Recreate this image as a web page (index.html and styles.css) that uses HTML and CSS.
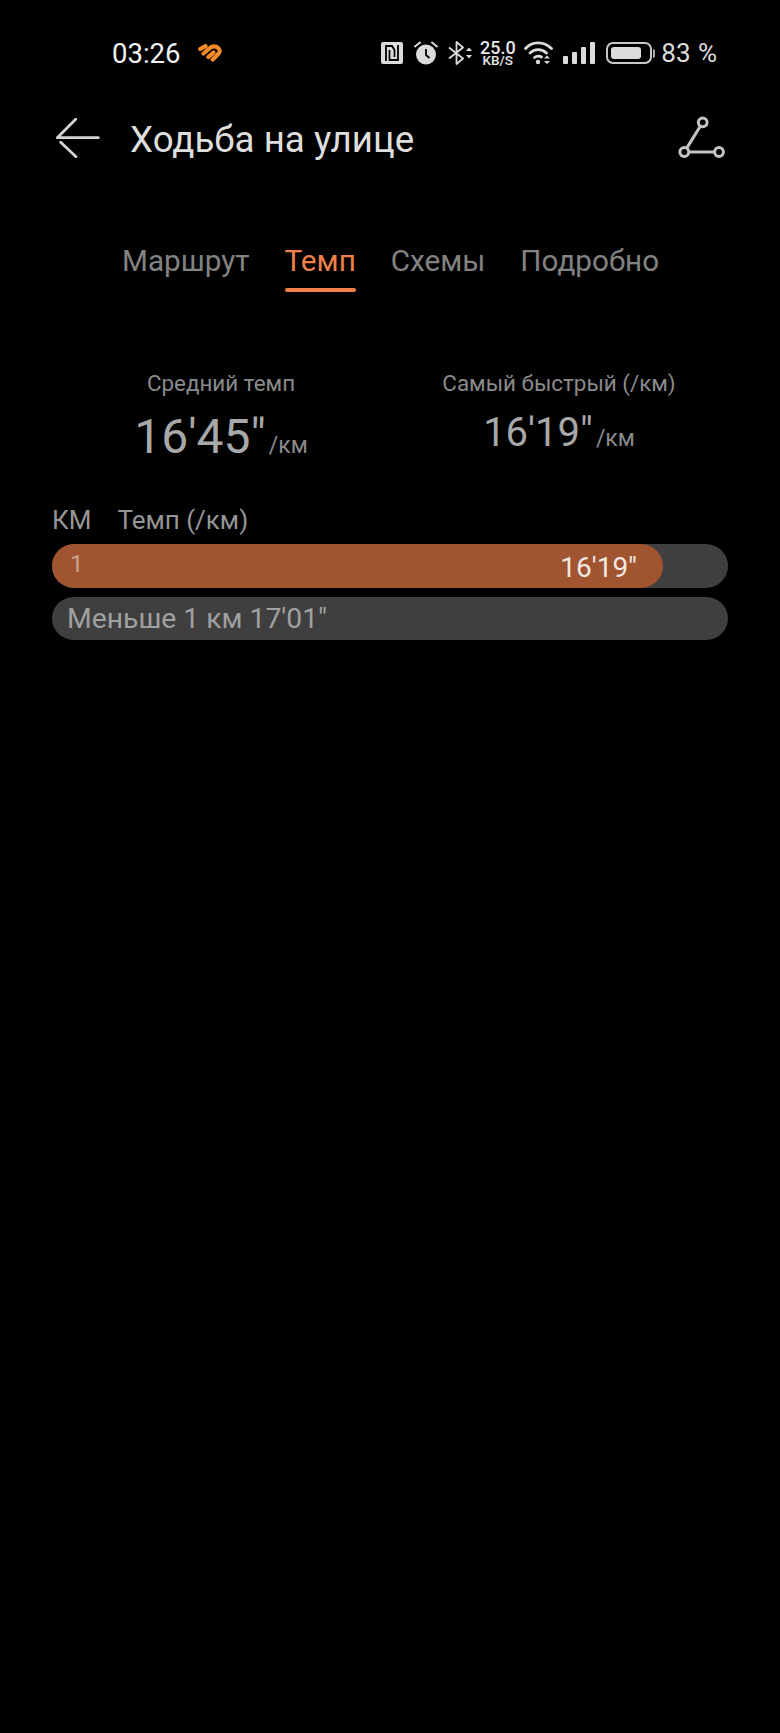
FILE: index.html
```html
<!DOCTYPE html>
<html lang="ru">
<head>
    <meta charset="UTF-8">
    <meta name="viewport" content="width=device-width, initial-scale=1.0">
    <title>Ходьба на улице</title>
    <link rel="stylesheet" href="styles.css">
</head>
<body>
    <!-- status bar -->
    <div class="status-bar">
        <div class="status-left">
            <span class="clock">03:26</span>
            <svg class="heart-icon" width="24" height="18" viewBox="0 0 24 18" fill="none" stroke="#f58b26" stroke-width="4.2" stroke-linecap="round" stroke-linejoin="round">
                <path d="M2.2 5 L7.5 2.2"/>
                <path d="M5.5 9.5 L13 3.2 C16 1.8 18 2.2 20 3.7 C22.2 5.7 22.2 8 20.2 10 L14.7 15.5"/>
                <path d="M10.3 13 L15.5 8.5"/>
            </svg>
        </div>
        <div class="status-right">
            <svg class="nfc-icon" width="22" height="22" viewBox="0 0 22 22">
                <rect width="22" height="22" rx="2" fill="#dcdcdc"/>
                <path d="M5 19 V4 H11 L13.5 8 V15 M8.5 8 V18 H17 V3" fill="none" stroke="#000" stroke-width="1.8"/>
            </svg>
            <svg class="alarm-icon" width="24" height="24" viewBox="0 0 24 24">
                <circle cx="12" cy="13.5" r="10" fill="#dcdcdc"/>
                <path d="M12 8 V14 L15.5 17" fill="none" stroke="#000" stroke-width="1.8"/>
                <path d="M1 5.5 L6 1.5 M23 5.5 L18 1.5" fill="none" stroke="#dcdcdc" stroke-width="2" stroke-linecap="round"/>
            </svg>
            <svg class="bt-icon" width="25" height="24" viewBox="0 0 25 24">
                <path d="M1 6.5 L15 17.5 L8.5 23 V1 L15 6.5 L1 17.5" fill="none" stroke="#dcdcdc" stroke-width="1.8" stroke-linejoin="round"/>
                <path d="M18 10 L21 6.5 L24 10 Z M18 14 L21 17.5 L24 14 Z" fill="#dcdcdc"/>
            </svg>
            <div class="speed">
                <span class="speed-value">25.0</span>
                <span class="speed-unit">KB/S</span>
            </div>
            <svg class="wifi-icon" width="29" height="24" viewBox="0 0 29 24" fill="none" stroke="#dcdcdc" stroke-width="2.8" stroke-linecap="round">
                <path d="M1.5 7.5 C8 0 20 0 27.5 7.5"/>
                <path d="M6 12 C10.5 7.5 17.5 7.5 22.5 12"/>
                <path d="M10.5 16.5 C12.5 15 15.5 15 17.5 16"/>
                <circle cx="14" cy="21" r="2.2" fill="#dcdcdc" stroke="none"/>
                <path d="M20 17.5 L23 14.5 L26 17.5 Z M20 20 L23 23 L26 20 Z" fill="#dcdcdc" stroke="none"/>
            </svg>
            <div class="signal">
                <span class="signal-bar signal-bar-1"></span>
                <span class="signal-bar signal-bar-2"></span>
                <span class="signal-bar signal-bar-3"></span>
                <span class="signal-bar signal-bar-4"></span>
            </div>
            <div class="battery">
                <div class="battery-body"><div class="battery-level"></div></div>
                <div class="battery-tip"></div>
            </div>
            <span class="percent">83 %</span>
        </div>
    </div>

    <!-- title row -->
    <div class="title-row">
        <svg class="back-icon" width="48" height="40" viewBox="0 0 48 40" fill="none" stroke="#d4d4d4" stroke-width="2.8" stroke-linecap="round" stroke-linejoin="round">
            <path d="M22.7 1.3 L4.3 19.7 H45.3"/>
            <path d="M7.7 24.3 L23 38.7"/>
        </svg>
        <h1 class="title">Ходьба на улице</h1>
        <svg class="share-icon" width="50" height="46" viewBox="0 0 50 46" fill="none" stroke="#c4c4c4" stroke-width="3">
            <circle cx="24.7" cy="7.3" r="4.4"/>
            <circle cx="6.3" cy="37" r="4.4"/>
            <circle cx="41" cy="37" r="4.4"/>
            <path d="M22.3 11.2 L8.7 33.1 M10.8 37 H36.5"/>
        </svg>
    </div>

    <!-- tabs -->
    <div class="tabs">
        <div class="tab">Маршрут</div>
        <div class="tab active">Темп</div>
        <div class="tab">Схемы</div>
        <div class="tab">Подробно</div>
    </div>

    <!-- summary -->
    <div class="stats">
        <div class="stat">
            <div class="stat-label">Средний темп</div>
            <div class="stat-value big">16'45"<span class="stat-unit">/км</span></div>
        </div>
        <div class="stat">
            <div class="stat-label">Самый быстрый (/км)</div>
            <div class="stat-value">16'19"<span class="stat-unit">/км</span></div>
        </div>
    </div>

    <!-- pace table -->
    <div class="pace-head">
        <span>КМ</span>
        <span>Темп (/км)</span>
    </div>
    <div class="pace-bar">
        <div class="pace-fill" style="width: 90.4%">
            <span class="pace-km">1</span>
            <span class="pace-time">16'19"</span>
        </div>
    </div>
    <div class="pace-bar pace-rest">Меньше 1 км 17'01"</div>
</body>
</html>
```

FILE: styles.css
```css
* {
    box-sizing: border-box;
}

body {
    font-family: Roboto, "Noto Sans", sans-serif;
    margin: 0;
    padding: 0;
    width: 780px;
    height: 1733px;
    overflow: hidden;
    background-color: #000;
    color: #dcdcdc;
}

/* status bar */
.status-bar {
    display: flex;
    justify-content: space-between;
    align-items: center;
    height: 30px;
    margin-top: 38px;
    padding: 0 63px 0 112px;
}

.status-left,
.status-right {
    display: flex;
    align-items: center;
}

.clock {
    font-size: 27.5px;
    color: #f2f2f2;
}

.heart-icon {
    margin-left: 18px;
}

.alarm-icon {
    margin-left: 11px;
}

.bt-icon {
    margin-left: 10px;
}

.speed {
    display: flex;
    flex-direction: column;
    align-items: center;
    margin-left: 7px;
    width: 35px;
    font-weight: 500;
    color: #e6e6e6;
}

.speed-value {
    font-size: 18px;
    line-height: 15px;
}

.speed-unit {
    font-size: 13.5px;
    line-height: 11px;
}

.wifi-icon {
    margin-left: 9px;
}

.signal {
    display: flex;
    align-items: flex-end;
    gap: 4px;
    height: 22px;
    margin-left: 10px;
}

.signal-bar {
    width: 5px;
    background-color: #dcdcdc;
    border-radius: 1px;
}

.signal-bar-1 { height: 8px; }
.signal-bar-2 { height: 12px; }
.signal-bar-3 { height: 17px; }
.signal-bar-4 { height: 22px; }

.battery {
    display: flex;
    align-items: center;
    margin-left: 11px;
}

.battery-body {
    width: 46px;
    height: 22px;
    padding: 3px;
    border: 2px solid #c8c8c8;
    border-radius: 7px;
}

.battery-level {
    width: 83%;
    height: 100%;
    background-color: #dcdcdc;
    border-radius: 3px;
}

.battery-tip {
    width: 2px;
    height: 9px;
    margin-left: 1px;
    background-color: #aaa;
    border-radius: 0 2px 2px 0;
}

.percent {
    margin-left: 6px;
    font-size: 26px;
    word-spacing: 1px;
}

/* title row */
.title-row {
    display: flex;
    align-items: center;
    height: 46px;
    margin-top: 47px;
    padding: 0 52px;
}

.back-icon {
    margin-left: 1px;
}

.title {
    flex: 1;
    margin: 2px 0 0 29px;
    font-size: 36.7px;
    font-weight: 400;
    color: #dedede;
}

/* tabs */
.tabs {
    display: flex;
    gap: 35px;
    margin-top: 80px;
    padding-left: 122px;
}

.tab {
    font-size: 29.7px;
    line-height: 40px;
    color: #828282;
}

.tab.active {
    color: #f0804a;
}

.tab.active::after {
    content: "";
    display: block;
    height: 4px;
    margin-top: 7px;
    background-color: #f0804a;
    border-radius: 2px;
}

/* summary */
.stats {
    display: grid;
    grid-template-columns: repeat(2, 1fr);
    margin: 0 52px 29px;
    padding-top: 77px;
    text-align: center;
}

.stat-label {
    font-size: 22.4px;
    line-height: 28px;
    color: #8a8a8a;
}

.stat-value {
    margin-top: 12px;
    font-size: 40px;
    line-height: 48px;
    color: #a8a8a8;
}

.stat-value.big {
    margin-top: 11px;
    font-size: 48px;
    line-height: 58px;
}

.stat-unit {
    margin-left: 3px;
    font-size: 23px;
    color: #8a8a8a;
}

/* pace table */
.pace-head {
    display: flex;
    gap: 26px;
    margin: 0 52px;
    font-size: 26px;
    line-height: 32px;
    color: #959595;
}

.pace-bar {
    height: 44px;
    margin: 8px 52px 0;
    background-color: #3f3f3f;
    border-radius: 22px;
}

.pace-fill {
    display: flex;
    justify-content: space-between;
    align-items: center;
    height: 100%;
    padding: 0 26px 0 18px;
    background-color: #a05430;
    border-radius: 22px;
}

.pace-km {
    margin-top: -5px;
    font-size: 24px;
    color: #c9a48e;
}

.pace-time {
    margin-top: 2px;
    font-size: 28px;
    color: #f0e8e2;
}

.pace-rest {
    height: 43px;
    margin-top: 9px;
    padding-left: 15px;
    font-size: 28.3px;
    line-height: 43px;
    color: #a0a0a0;
}
```
